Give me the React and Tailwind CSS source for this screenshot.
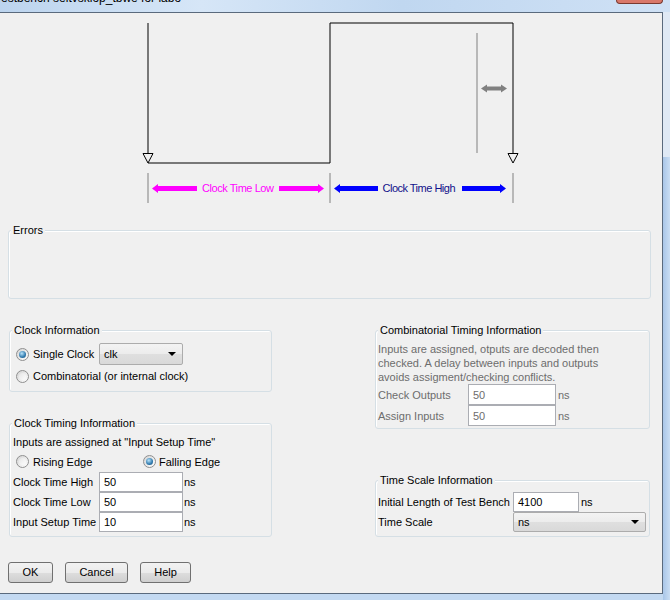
import React from 'react'

const label = 'text-[11px] leading-[14px] text-black'

function GroupBox({ title, className, children }) {
  return (
    <div className={`flex flex-col rounded-[3px] border border-[#d5dfe5] shadow-[inset_1px_1px_0_#ffffff] ${className}`}>
      <span className="-mt-[7px] ml-[2px] block h-[13px] w-fit bg-[#f0f0f0] px-[2px] text-[11px] leading-[13px] text-black">
        {title}
      </span>
      {children}
    </div>
  )
}

function Radio({ checked }) {
  return (
    <span className="flex h-[13px] w-[13px] shrink-0 items-center justify-center rounded-full border border-[#8f8f8f] bg-[linear-gradient(135deg,#d4d4d4,#ffffff)]">
      {checked ? (
        <span className="h-[7px] w-[7px] rounded-full bg-[radial-gradient(circle_at_40%_35%,#b9e4fb,#2f79ad_60%,#1b4f78)]" />
      ) : (
        <span className="h-[7px] w-[7px] rounded-full bg-[linear-gradient(135deg,#e6e6e6,#fdfdfd)]" />
      )}
    </span>
  )
}

function Select({ value, className }) {
  return (
    <div className={`flex h-full items-center justify-between rounded-[2px] border border-[#acacac] bg-[linear-gradient(#f3f3f3_0%,#ececec_50%,#dfdfdf_51%,#d9d9d9_100%)] pl-[4px] pr-[6px] ${className}`}>
      <span className="text-[11px] leading-[14px] text-black">{value}</span>
      <span className="h-0 w-0 border-x-[4px] border-t-[4px] border-x-transparent border-t-black" />
    </div>
  )
}

function TextBox({ value, className, muted }) {
  return (
    <div className={`flex h-full items-center border border-[#abadb3] bg-white pl-[4px] ${className}`}>
      <span className={`text-[11px] leading-[14px] ${muted ? 'text-[#6d6d6d]' : 'text-black'}`}>{value}</span>
    </div>
  )
}

function Button({ children, className }) {
  return (
    <div className={`flex h-[21px] items-center justify-center rounded-[3px] border border-[#707070] bg-[linear-gradient(#f2f2f2_0%,#ebebeb_50%,#dddddd_51%,#cfcfcf_100%)] text-[11px] text-black ${className}`}>
      {children}
    </div>
  )
}

function Diagram() {
  return (
    <svg width="662" height="200" viewBox="0 13 662 200" className="block shrink-0">
      <polyline points="148,23 148,153" fill="none" stroke="#000" strokeWidth="1" />
      <polyline points="148,163 330,163 330,23 513,23 513,153" fill="none" stroke="#000" strokeWidth="1" />
      <polygon points="143,153.5 153,153.5 148,163" fill="#f0f0f0" stroke="#000" strokeWidth="1" />
      <polygon points="508,153.5 518,153.5 513,163" fill="#f0f0f0" stroke="#000" strokeWidth="1" />
      <line x1="477" y1="33" x2="477" y2="153" stroke="#808080" strokeWidth="1" />
      <polygon points="481,88.5 487,84.5 487,86.5 501,86.5 501,84.5 507,88.5 501,92.5 501,90.5 487,90.5 487,92.5" fill="#808080" />
      {[148, 330, 513].map((x) => (
        <line key={x} x1={x} y1="173" x2={x} y2="203" stroke="#808080" strokeWidth="1" />
      ))}
      <polygon points="152,188.5 158,184 158,186 197,186 197,191 158,191 158,193" fill="#ff00ff" />
      <polygon points="324,188.5 318,184 318,186 279,186 279,191 318,191 318,193" fill="#ff00ff" />
      <text x="238" y="192" textAnchor="middle" textLength="72" fontFamily="Liberation Sans, Arial, sans-serif" fontSize="11" fill="#ff00ff">
        Clock Time Low
      </text>
      <polygon points="334,188.5 340,184 340,186 378,186 378,191 340,191 340,193" fill="#0000ff" />
      <polygon points="506,188.5 500,184 500,186 462,186 462,191 500,191 500,193" fill="#0000ff" />
      <text x="419" y="192" textAnchor="middle" textLength="73" fontFamily="Liberation Sans, Arial, sans-serif" fontSize="11" fill="#10108a">
        Clock Time High
      </text>
    </svg>
  )
}

export default function App() {
  return (
    <div className="flex h-[600px] w-[670px] flex-col overflow-hidden bg-[#c3d9f1] font-['Liberation_Sans',Arial,sans-serif]">
      {/* title bar, mostly off screen */}
      <div className="flex h-[12px] shrink-0 overflow-hidden bg-[linear-gradient(90deg,#bcd4ee,#d6e6f7_30%,#c0d7f0_60%,#cfe1f5)]">
        <span className="-ml-[5px] -mt-[9px] whitespace-nowrap text-[12px] leading-[14px] text-black">
          Testbench seltvsklop_tbwe for labo
        </span>
        <span className="ml-auto mr-[7px] h-[4px] w-[47px] rounded-b-[4px] border border-t-0 border-[#7a3a30] bg-[#d9786a]" />
      </div>

      <div className="flex min-h-0 flex-1">
        <div className="flex h-[582px] w-[663px] flex-col border-y border-r border-[#5a6a7d] bg-[#f0f0f0]">
          <Diagram />

          <GroupBox title="Errors" className="ml-[8px] mt-[17px] h-[69px] w-[643px]" />

          <div className="mt-[31px] flex h-[207px]">
            <div className="ml-[9px] flex w-[263px] flex-col">
              <GroupBox title="Clock Information" className="h-[62px]">
                <div className="mt-[6px] flex h-[22px] items-center pl-[6px]">
                  <Radio checked />
                  <span className={`${label} ml-[4px] w-[66px]`}>Single Clock</span>
                  <Select value="clk" className="w-[84px]" />
                </div>
                <div className="flex h-[22px] items-center pl-[6px]">
                  <Radio />
                  <span className={`${label} ml-[4px]`}>Combinatorial (or internal clock)</span>
                </div>
              </GroupBox>

              <GroupBox title="Clock Timing Information" className="mt-auto h-[114px]">
                <div className={`${label} mt-[5px] pl-[3px]`}>Inputs are assigned at "Input Setup Time"</div>
                <div className="mt-[2px] flex h-[21px] items-center pl-[6px]">
                  <div className="flex w-[127px] items-center">
                    <Radio />
                    <span className={`${label} ml-[4px]`}>Rising Edge</span>
                  </div>
                  <Radio checked />
                  <span className={`${label} ml-[3px]`}>Falling Edge</span>
                </div>
                {[
                  ['Clock Time High', '50'],
                  ['Clock Time Low', '50'],
                  ['Input Setup Time', '10'],
                ].map(([name, val]) => (
                  <div key={name} className="flex h-[20px] items-center pl-[3px]">
                    <span className={`${label} w-[86px] whitespace-nowrap`}>{name}</span>
                    <TextBox value={val} className="w-[84px]" />
                    <span className={`${label} ml-[1px]`}>ns</span>
                  </div>
                ))}
              </GroupBox>
            </div>

            <div className="ml-[103px] flex w-[275px] flex-col">
              <GroupBox title="Combinatorial Timing Information" className="h-[99px]">
                <div className="mt-[5px] pl-[2px] text-[11px] leading-[14px] text-[#6d6d6d]">
                  <div>Inputs are assigned, otputs are decoded then</div>
                  <div>checked. A delay between inputs and outputs</div>
                  <div>avoids assigment/checking conflicts.</div>
                </div>
                {[
                  ['Check Outputs', '50'],
                  ['Assign Inputs', '50'],
                ].map(([name, val]) => (
                  <div key={name} className="flex h-[21px] items-center pl-[2px]">
                    <span className="w-[90px] text-[11px] leading-[14px] text-[#6d6d6d]">{name}</span>
                    <TextBox value={val} muted className="w-[88px]" />
                    <span className="ml-[2px] text-[11px] leading-[14px] text-[#6d6d6d]">ns</span>
                  </div>
                ))}
              </GroupBox>

              <GroupBox title="Time Scale Information" className="mt-auto h-[57px]">
                <div className="mt-[5px] flex h-[20px] items-center pl-[2px]">
                  <span className={`${label} w-[135px] whitespace-nowrap`}>Initial Length of Test Bench</span>
                  <TextBox value="4100" className="w-[66px]" />
                  <span className={`${label} ml-[2px]`}>ns</span>
                </div>
                <div className="flex h-[20px] items-center pl-[2px]">
                  <span className={`${label} w-[135px]`}>Time Scale</span>
                  <Select value="ns" className="w-[133px]" />
                </div>
              </GroupBox>
            </div>
          </div>

          <div className="mt-[25px] flex">
            <Button className="ml-[8px] w-[45px]">OK</Button>
            <Button className="ml-[12px] w-[63px]">Cancel</Button>
            <Button className="ml-[12px] w-[51px]">Help</Button>
          </div>
        </div>
        <div className="flex flex-1 flex-col">
          <div className="h-[145px] bg-[#dfe9f5]" />
          <div className="flex-1 bg-[linear-gradient(90deg,#a9c6e8,#c9ddf3)]" />
        </div>
      </div>
    </div>
  )
}
